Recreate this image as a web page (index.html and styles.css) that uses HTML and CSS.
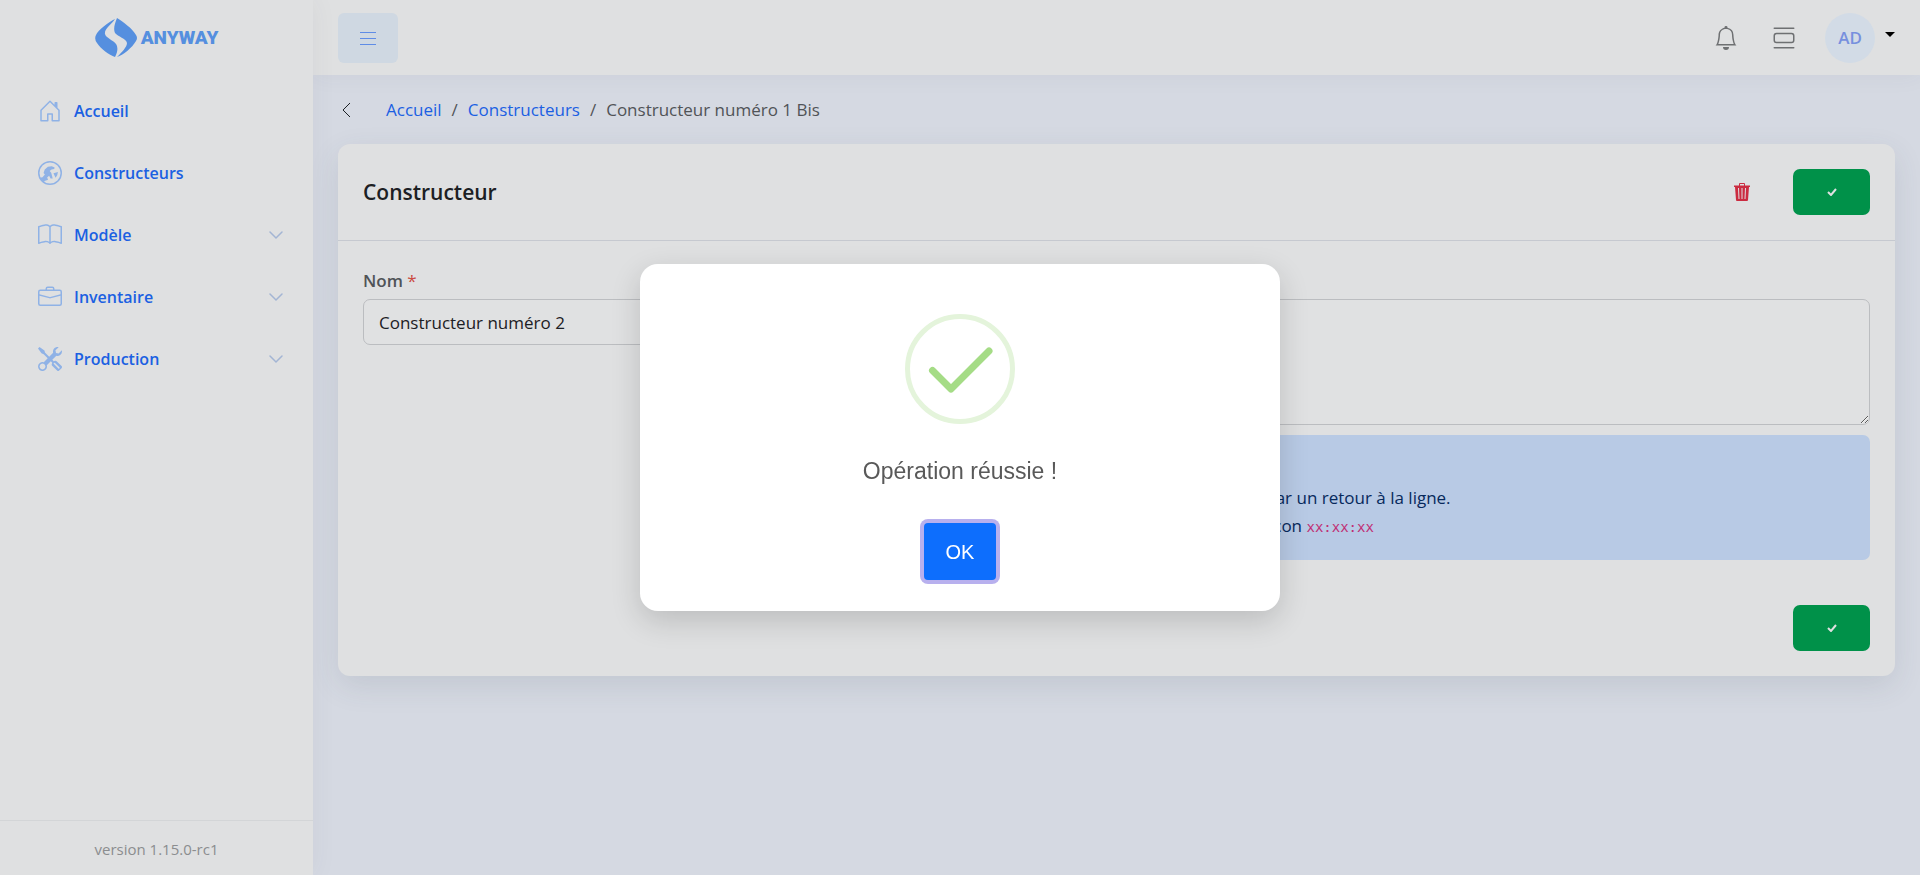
FILE: index.html
```html
<!DOCTYPE html>
<html lang="fr">
<head>
<meta charset="utf-8">
<title>Constructeur</title>
<link rel="stylesheet" href="styles.css">
</head>
<body>
<div class="app">
  <aside class="sidebar">
    <a class="brand" href="#">
      <svg class="brand-mark" viewBox="0 0 42 40"><path d="M20 1C14 4 3 12 1 17q-2 4 1 8c4 6 12 12 18 14 3-5 3-10 1-13-3-4-10-6-11-10-1-5 7-10 10-15Z"/><path d="M22 0c6 4 15 10 19 17q2 3 0 6c-4 7-13 14-19 16 5-5 10-10 10-14-1-5-9-6-12-10-2-4 0-10 2-15Z"/></svg>
      <span class="brand-name">ANYWAY</span>
    </a>
    <nav class="menu">
      <a class="menu-item" href="#"><svg class="menu-icon" viewBox="0 0 16 16"><path d="M8.354 1.146a.5.5 0 0 0-.708 0l-6 6A.5.5 0 0 0 1.500 7.500v7a.5.5 0 0 0 .5.5h4.500a.5.5 0 0 0 .5-.5v-4h2v4a.5.5 0 0 0 .5.5H14a.5.5 0 0 0 .5-.5v-7a.5.5 0 0 0-.146-.354L13 5.793V2.500a.5.5 0 0 0-.5-.5h-1a.5.5 0 0 0-.5.5v1.293L8.354 1.146zM2.500 14V7.707l5.500-5.500 5.500 5.500V14H10v-4a.5.5 0 0 0-.5-.5h-3a.5.5 0 0 0-.5.5v4H2.500z"/></svg><span>Accueil</span></a>
      <a class="menu-item" href="#"><svg class="menu-icon" viewBox="0 0 16 16"><path fill-rule="evenodd" d="M8 0a8 8 0 1 0 0 16A8 8 0 0 0 8 0ZM8 1a7 7 0 1 1 0 14A7 7 0 0 1 8 1Z"/><path d="M1.300 11.200 3 10.800 4.600 9 3.700 8l.8-2.300L6.600 3.900l2.600-.4 1.900.8-.3 1-1.800.3-1.200 1.100 1 1.200 1 3.800-1.400-.1-1-1.800-1.300 1.200.6 1.500-2.300.9-.9 1.300ZM10.300 8.200l3-.9-.5 2.200-1.100 1.700Z"/></svg><span>Constructeurs</span></a>
      <a class="menu-item" href="#"><svg class="menu-icon" viewBox="0 0 16 16"><path d="M1 2.828c.885-.37 2.154-.769 3.388-.893 1.330-.134 2.458.063 3.112.752v9.746c-.935-.53-2.120-.603-3.213-.493-1.180.12-2.370.461-3.287.811V2.828zm7.500-.141c.654-.689 1.782-.886 3.112-.752 1.234.124 2.503.523 3.388.893v9.923c-.918-.35-2.107-.692-3.287-.81-1.094-.111-2.278-.039-3.213.492V2.687zM8 1.783C7.015.936 5.587.81 4.287.94c-1.514.153-3.042.672-3.994 1.105A.5.5 0 0 0 0 2.500v11a.5.5 0 0 0 .707.455c.882-.4 2.303-.881 3.680-1.020 1.409-.142 2.590.087 3.223.877a.5.5 0 0 0 .78 0c.633-.79 1.814-1.019 3.222-.877 1.378.139 2.800.62 3.681 1.020A.5.5 0 0 0 16 13.500v-11a.5.5 0 0 0-.293-.455c-.952-.433-2.480-.952-3.994-1.105C10.413.809 8.985.936 8 1.783z"/></svg><span>Modèle</span><svg class="menu-chevron" viewBox="0 0 14 14"><path d="m1 4 6 6 6-6"/></svg></a>
      <a class="menu-item" href="#"><svg class="menu-icon" viewBox="0 0 16 16"><path d="M6.500 1A1.500 1.500 0 0 0 5 2.500V3H1.500A1.500 1.500 0 0 0 0 4.500v8A1.500 1.500 0 0 0 1.500 14h13a1.500 1.500 0 0 0 1.500-1.500v-8A1.500 1.500 0 0 0 14.500 3H11v-.5A1.500 1.500 0 0 0 9.500 1h-3zm0 1h3a.5.5 0 0 1 .5.5V3H6v-.5a.5.5 0 0 1 .5-.5zm1.886 6.914L15 7.151V12.500a.5.5 0 0 1-.5.5h-13a.5.5 0 0 1-.5-.5V7.150l6.614 1.764a1.500 1.500 0 0 0 .772 0zM1.500 4h13a.5.5 0 0 1 .5.5v1.616L8.129 7.948a.5.5 0 0 1-.258 0L1 6.116V4.500a.5.5 0 0 1 .5-.5z"/></svg><span>Inventaire</span><svg class="menu-chevron" viewBox="0 0 14 14"><path d="m1 4 6 6 6-6"/></svg></a>
      <a class="menu-item" href="#"><svg class="menu-icon" viewBox="0 0 16 16"><path d="M1 0 0 1l2.200 3.081a1 1 0 0 0 .815.419h.07a1 1 0 0 1 .708.293l2.675 2.675-2.617 2.654A3.003 3.003 0 0 0 0 13a3 3 0 1 0 5.878-.851l2.654-2.617.968.968-.305.914a1 1 0 0 0 .242 1.023l3.270 3.270a.997.997 0 0 0 1.414 0l1.586-1.586a.997.997 0 0 0 0-1.414l-3.270-3.270a1 1 0 0 0-1.023-.242L10.500 9.500l-.96-.96 2.680-2.643A3.005 3.005 0 0 0 16 3c0-.269-.035-.53-.102-.777l-2.140 2.141L12 4l-.364-1.757L13.777.102a3 3 0 0 0-3.675 3.680L7.462 6.460 4.793 3.793a1 1 0 0 1-.293-.707v-.071a1 1 0 0 0-.419-.814L1 0Zm9.646 10.646a.5.5 0 0 1 .708 0l2.914 2.915a.5.5 0 0 1-.707.707l-2.915-2.914a.5.5 0 0 1 0-.708ZM3 11l.471.242.529.026.287.445.445.287.026.529L5 13l-.242.471-.026.529-.445.287-.287.445-.529.026L3 15l-.471-.242L2 14.732l-.287-.445L1.268 14l-.026-.529L1 13l.242-.471.026-.529.445-.287.287-.445.529-.026L3 11Z"/></svg><span>Production</span><svg class="menu-chevron" viewBox="0 0 14 14"><path d="m1 4 6 6 6-6"/></svg></a>
    </nav>
    <footer class="version">version 1.15.0-rc1</footer>
  </aside>

  <div class="page">
    <header class="topbar">
      <button class="menu-toggle" type="button" aria-label="Menu"><svg viewBox="0 0 18 18"><path d="M1 3h16M1 9h16M1 15h16"/></svg></button>
      <div class="topbar-tools">
        <button class="tool" type="button" aria-label="Notifications"><svg viewBox="0 0 16 16"><path d="M8 16a2 2 0 0 0 2-2H6a2 2 0 0 0 2 2zM8 1.918l-.797.161A4.002 4.002 0 0 0 4 6c0 .628-.134 2.197-.459 3.742-.16.767-.376 1.566-.663 2.258h10.244c-.287-.692-.502-1.490-.663-2.258C12.134 8.197 12 6.628 12 6a4.002 4.002 0 0 0-3.203-3.920L8 1.917zM14.220 12c.223.447.481.801.78 1H1c.299-.199.557-.553.78-1C2.680 10.200 3 6.880 3 6c0-2.420 1.720-4.440 4.005-4.901a1 1 0 1 1 1.990 0A5.002 5.002 0 0 1 13 6c0 .88.32 4.200 1.220 6z"/></svg></button>
        <button class="tool" type="button" aria-label="Affichage"><svg viewBox="0 0 16 16"><path d="M3 4.500h10a2 2 0 0 1 2 2v3a2 2 0 0 1-2 2H3a2 2 0 0 1-2-2v-3a2 2 0 0 1 2-2zm0 1a1 1 0 0 0-1 1v3a1 1 0 0 0 1 1h10a1 1 0 0 0 1-1v-3a1 1 0 0 0-1-1H3zM1 1.500a.5.5 0 0 1 .5-.5h13a.5.5 0 0 1 0 1h-13a.5.5 0 0 1-.5-.5zm0 13a.5.5 0 0 1 .5-.5h13a.5.5 0 0 1 0 1h-13a.5.5 0 0 1-.5-.5z"/></svg></button>
        <button class="account" type="button" aria-label="Compte AD"><span class="avatar">AD</span><span class="caret"></span></button>
      </div>
    </header>

    <main class="content">
      <div class="crumbs">
        <a class="back" href="#" aria-label="Retour"><svg viewBox="0 0 16 16"><path d="m12 1-7 7 7 7"/></svg></a>
        <nav class="crumb-list"><a href="#">Accueil</a><span>/</span><a href="#">Constructeurs</a><span>/</span><span>Constructeur numéro 1 Bis</span></nav>
      </div>

      <section class="card">
        <header class="card-head">
          <h1 class="card-title">Constructeur</h1>
          <div class="card-actions">
            <button class="delete" type="button" aria-label="Supprimer"><svg viewBox="0 0 16 18"><path fill-rule="evenodd" d="M5 2.500V1q0-1 1-1h4q1 0 1 1v1.500h5V4h-1l-1 13q0 1-1 1H3q-1 0-1-1L1 4H0V2.500ZM6 1v1.500h4V1ZM4 5l.5 11h1L5 5Zm3.500 0v11h1V5ZM11 5l-.5 11h1L12 5Z"/></svg></button>
            <button class="save" type="button" aria-label="Enregistrer"><svg viewBox="0 0 10 8"><path d="m1 4 3 3 5-6"/></svg></button>
          </div>
        </header>
        <form class="card-body">
          <div class="fields">
            <div class="field">
              <label for="nom">Nom <span class="required">*</span></label>
              <input class="control" id="nom" type="text" value="Constructeur numéro 2">
            </div>
            <div class="field">
              <label for="mac">Préfixes</label>
              <textarea class="control control-area" id="mac"></textarea>
              <div class="hint">
                <p>Préfixes MAC :</p>
                <ul>
                  <li>Séparées par un retour à la ligne.</li>
                  <li>De cette façon <code>xx:xx:xx</code></li>
                </ul>
              </div>
            </div>
          </div>
          <div class="form-end"><button class="save" type="button" aria-label="Enregistrer"><svg viewBox="0 0 10 8"><path d="m1 4 3 3 5-6"/></svg></button></div>
        </form>
      </section>
    </main>
  </div>
</div>

<div class="overlay">
  <div class="dialog" role="dialog" aria-modal="true" aria-labelledby="message">
    <svg class="success" viewBox="0 0 110 110"><circle cx="55" cy="55" r="52.500"/><path d="m27.500 56.500 18.500 18.500 38-38"/></svg>
    <p class="message" id="message">Opération réussie !</p>
    <button class="confirm" type="button">OK</button>
  </div>
</div>
</body>
</html>
```
FILE: styles.css
```css
* { box-sizing: border-box; }

body {
  margin: 0;
  color: #1c2024;
  background: #d5d9e2;
  font: 17px/28px "Open Sans", "Noto Sans", sans-serif;
}

a { color: #1b60e2; text-decoration: none; }
button { padding: 0; border: 0; background: none; font: inherit; cursor: pointer; }
svg { display: block; }

.app { display: grid; grid-template-columns: 313px minmax(0, 1fr); min-height: 100vh; }

.sidebar { position: relative; display: flex; flex-direction: column; background: #dfe0e1; box-shadow: 0 0 25px rgba(60, 70, 90, .06); }
.brand { display: flex; align-items: center; justify-content: center; gap: 4px; height: 76px; }
.brand-mark { width: 42px; height: 40px; fill: #558fdf; }
.brand-name { color: #558fdf; font: 900 19px/24px Roboto, "Liberation Sans", sans-serif; }

.menu { display: flex; flex-direction: column; flex: 1; padding: 4px 30px 0 38px; }
.menu-item { display: flex; align-items: center; gap: 12px; height: 62px; font-weight: 600; font-size: 16px; }
.menu-icon { width: 24px; height: 24px; fill: #8fb2e6; }
.menu-chevron { width: 14px; height: 14px; margin-left: auto; fill: none; stroke: #a3b5d4; stroke-width: 1.5; stroke-linecap: round; }
.version { padding: 14px 15px 12px; border-top: 1px solid #d3d5d7; color: #8b8d8f; font-size: 15px; text-align: center; }

.page { min-width: 0; }
.topbar { display: flex; align-items: center; justify-content: space-between; height: 75px; padding: 0 25px; background: #dfe0e1; box-shadow: 0 0 25px rgba(60, 70, 90, .06); }
.menu-toggle { display: grid; place-items: center; width: 60px; height: 50px; border-radius: 6px; background: #cfd8e2; }
.menu-toggle svg { width: 18px; height: 18px; stroke: #5f8ce6; stroke-width: 1; shape-rendering: crispEdges; }
.topbar-tools { display: flex; align-items: center; }
.tool { display: grid; place-items: center; width: 58px; height: 50px; }
.tool svg { width: 24px; height: 24px; fill: #6e7072; }
.account { display: flex; align-items: center; gap: 10px; margin-left: 12px; }
.avatar { display: grid; place-items: center; width: 50px; height: 50px; border-radius: 50%; background: #d2dbe6; color: #7790de; font-weight: 600; }
.caret { margin-bottom: 6px; border: 5px solid transparent; border-top-color: #000; border-bottom: 0; }

.content { padding: 20px 25px; }
.crumbs { display: flex; align-items: center; gap: 32px; height: 30px; margin-bottom: 19px; }
.back svg { width: 16px; height: 16px; fill: none; stroke: #1c2024; stroke-width: 1; }
.crumb-list { display: flex; gap: 10px; color: #505357; }

.card { border-radius: 12px; background: #dfe0e1; box-shadow: 0 10px 30px rgba(60, 70, 90, .12); }
.card-head { display: flex; align-items: center; justify-content: space-between; height: 97px; padding: 0 25px; border-bottom: 1px solid #c6c9d0; }
.card-title { margin: 0; font-size: 21px; font-weight: 600; }
.card-actions { display: flex; align-items: center; gap: 43px; }
.delete svg { width: 16px; height: 18px; fill: #cb2b40; }
.save { display: grid; place-items: center; width: 77px; height: 46px; border-radius: 7px; background: #009149; }
.save svg { width: 10px; height: 8px; fill: none; stroke: #dfe0e1; stroke-width: 2; }

.card-body { padding: 26px 25px 25px; }
.fields { display: grid; grid-template-columns: 1fr 1fr; gap: 25px; }
.field { display: flex; flex-direction: column; }
.field label { margin-bottom: 4px; color: #505357; font-weight: 600; }
.required { color: #cb4a40; font-weight: 400; }
.control { height: 46px; padding: 0 15px; border: 1px solid #bbbdc0; border-radius: 7px; background: #e0e1e2; color: #1c2024; font: inherit; }
.control-area { height: 126px; resize: vertical; }
.hint { margin-top: 10px; padding: 21px 18px 20px; border-radius: 7px; background: #b8cae5; color: #07295c; }
.hint p, .hint ul { margin: 0; }
.hint ul { padding-left: 41px; }
.hint code { color: #c02f74; font: 14px "DejaVu Sans Mono", monospace; }
.form-end { display: flex; justify-content: flex-end; margin-top: 45px; }

.overlay { position: fixed; inset: 0; display: grid; place-items: center; }
.dialog { display: flex; flex-direction: column; align-items: center; width: 640px; padding: 50px 20px 31px; border-radius: 18px; background: #fff; box-shadow: 0 10px 30px rgba(0, 0, 0, .16); font-family: "Liberation Sans", Arial, sans-serif; }
.success { width: 110px; height: 110px; fill: none; stroke: #a5dc86; stroke-width: 7; stroke-linecap: round; stroke-linejoin: round; }
.success circle { stroke: #e4f4db; stroke-width: 5; }
.message { margin: 33px 0 38px; color: #595959; font-size: 23px; }
.confirm { width: 72px; height: 57px; border-radius: 4px; background: #0d6efd; box-shadow: 0 0 0 4px #b8b0ee; color: #fff; font-size: 20px; }
```
